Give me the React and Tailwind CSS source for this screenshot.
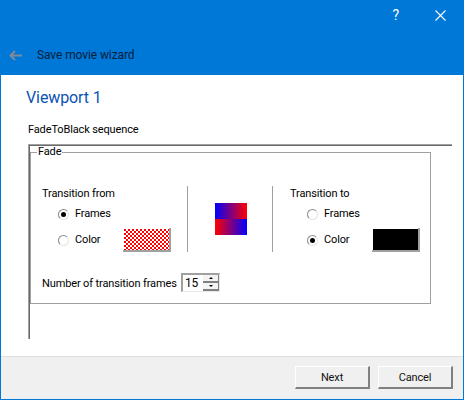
function Radio({ checked }) {
  return (
    <span className="flex items-center justify-center w-[11px] h-[11px] rounded-full border border-t-[#8a8a8a] border-l-[#8a8a8a] border-r-[#e4e4e4] border-b-[#e4e4e4] bg-white">
      {checked ? <span className="w-[5px] h-[5px] rounded-full bg-black" /> : null}
    </span>
  );
}
function Swatch({ pattern }) {
  return (
    <div className="w-[48px] h-[24px] border-r-2 border-b-2 border-[#a0a0a0] bg-white pl-px pt-px">
      {pattern ? (
        <svg width="45" height="21" shapeRendering="crispEdges" className="block">
          <defs>
            <pattern id="dither" width="4" height="4" patternUnits="userSpaceOnUse">
              <rect x="0" y="0" width="2" height="2" fill="#ff0000" />
              <rect x="2" y="2" width="2" height="2" fill="#ff0000" />
            </pattern>
          </defs>
          <rect width="45" height="21" fill="url(#dither)" />
        </svg>
      ) : (
        <div className="w-full h-full bg-black" />
      )}
    </div>
  );
}
function Choice({ title, indent, from }) {
  return (
    <div className="flex flex-col">
      <div className="h-[14px] leading-[16px]">{title}</div>
      <div className={`mt-[6px] h-4 flex items-center ${indent}`}>
        <Radio checked={from} />
        <span className="ml-[6px] pt-px">Frames</span>
      </div>
      <div className={`mt-[6px] h-6 flex items-center ${indent}`}>
        <Radio checked={!from} />
        <span className="ml-[6px] w-[48px] pt-px">Color</span>
        <Swatch pattern={from} />
      </div>
    </div>
  );
}
function Spin() {
  return (
    <div className="w-[39px] h-[19px] flex border-t-2 border-l-2 border-[#a0a0a0] border-b border-b-[#e8e8e8] border-r border-r-[#e8e8e8]">
      <div className="w-[20px] pl-[2px] leading-[16px] text-[12px] text-black">15</div>
      <div className="flex-1 flex flex-col">
        <div className="flex-1 bg-[#f4f4f4] border-r border-b-2 border-[#808080] flex items-center justify-center">
          <span className="w-0 h-0 border-x-[2px] border-x-transparent border-b-[2px] border-b-black" />
        </div>
        <div className="flex-1 bg-[#f4f4f4] border-r border-b-2 border-[#808080] flex items-center justify-center">
          <span className="w-0 h-0 border-x-[2px] border-x-transparent border-t-[2px] border-t-black" />
        </div>
      </div>
    </div>
  );
}
function Btn({ children }) {
  return (
    <button className="w-[75px] h-[23px] pt-[3px] bg-[#f0f0f0] border-t border-l border-t-white border-l-white border-r-2 border-b-2 border-r-[#808080] border-b-[#808080] text-[#111]">
      {children}
    </button>
  );
}
export default function App() {
  return (
    <div className="w-[464px] h-[400px] bg-[#0078d7] flex flex-col text-[11px] tracking-[-0.13px] text-[#000] font-['Roboto',sans-serif] overflow-hidden">
      <header className="h-[75px] flex flex-col shrink-0">
        <div className="h-[30px] flex items-center justify-end text-white">
          <span className="text-[14px] mr-[36px]">?</span>
          <svg width="11" height="11" viewBox="0 0 11 11" className="mr-[18px]" stroke="#fff" strokeWidth="1.1" fill="none">
            <path d="M0.5 0.5L10.5 10.5M10.5 0.5L0.5 10.5" />
          </svg>
        </div>
        <div className="flex items-center h-[20px] mt-[15px]">
          <svg width="13" height="11" viewBox="0 0 13 11" className="ml-[9px]" stroke="#7f8a96" strokeWidth="2" fill="none">
            <path d="M6 1L1.5 5.5L6 10M2 5.5H13" />
          </svg>
          <span className="ml-[15px] text-[12px] tracking-[-0.1px] text-[#06203c]">Save movie wizard</span>
        </div>
      </header>
      <div className="flex-1 mx-px mb-px flex flex-col min-h-0">
        <main className="h-[281px] bg-white flex flex-col shrink-0">
          <h1 className="mt-[12px] ml-[25px] h-[22px] leading-[22px] text-[16px] tracking-[-0.1px] text-[#0a52b5]">Viewport 1</h1>
          <p className="mt-[13px] ml-[27px] h-4 leading-4">FadeToBlack sequence</p>
          <section className="mt-[6px] ml-[27px] w-[424px] h-[195px] border-t border-l border-[#a0a0a0]">
            <div className="h-full border-t border-l border-[#696969]">
              <fieldset className="w-[401px] h-[158px] border border-[#a0a0a0]">
                <legend className="ml-[6px] px-[1px] leading-3">Fade</legend>
                <div className="mt-[28px] flex h-[66px]">
                  <div className="w-[156px] pl-[11px]">
                    <Choice title="Transition from" indent="ml-[16px]" from />
                  </div>
                  <div className="w-[86px] border-l border-r border-[#a0a0a0] pl-[27px] pt-[17px]">
                    <div className="w-[32px] h-[16px] bg-[linear-gradient(to_right,#0000ff,#ff0000)]" />
                    <div className="w-[32px] h-[16px] bg-[linear-gradient(to_right,#ff0000,#0000ff)]" />
                  </div>
                  <div className="pl-[17px]">
                    <Choice title="Transition to" indent="ml-[17px]" from={false} />
                  </div>
                </div>
                <div className="mt-[21px] ml-[11px] flex items-center h-[19px]">
                  <span className="w-[139px] pt-[3px] whitespace-nowrap">Number of transition frames</span>
                  <Spin />
                </div>
              </fieldset>
            </div>
          </section>
        </main>
        <footer className="flex-1 bg-[#f0f0f0] border-t border-[#dfdfdf] flex justify-end items-start pt-[9px] pr-[10px] gap-[8px]">
          <Btn>Next</Btn>
          <Btn>Cancel</Btn>
        </footer>
      </div>
    </div>
  );
}
